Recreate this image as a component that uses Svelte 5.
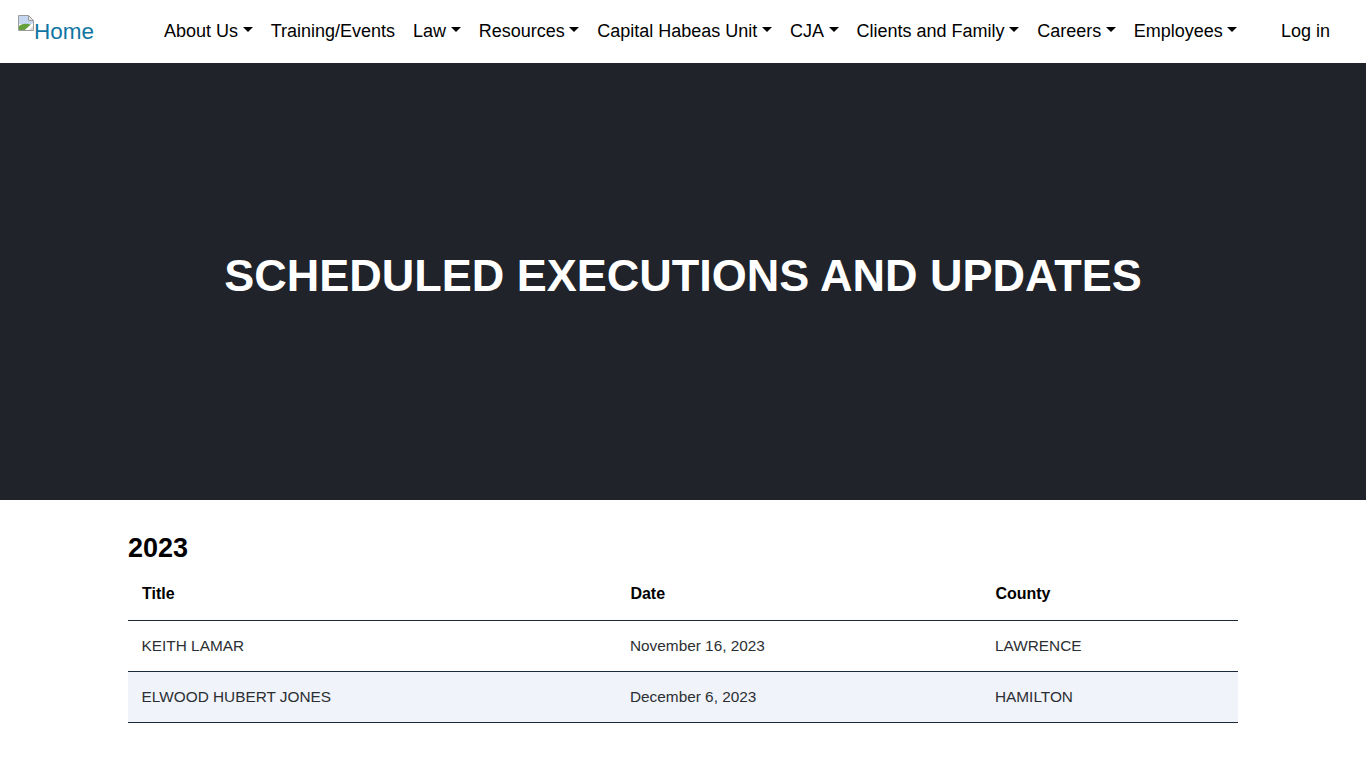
<script>
  const menu = [
    { label: "About Us", caret: true },
    { label: "Training/Events", caret: false },
    { label: "Law", caret: true },
    { label: "Resources", caret: true },
    { label: "Capital Habeas Unit", caret: true },
    { label: "CJA", caret: true },
    { label: "Clients and Family", caret: true },
    { label: "Careers", caret: true },
    { label: "Employees", caret: true }
  ];

  const rows = [
    { title: "KEITH LAMAR", date: "November 16, 2023", county: "LAWRENCE" },
    { title: "ELWOOD HUBERT JONES", date: "December 6, 2023", county: "HAMILTON" }
  ];
</script>

<header class="navbar">
  <a href="#home" class="brand">
    <svg class="broken" width="16" height="16" viewBox="0 0 16 16" aria-hidden="true">
      <path d="M0.5 0.5H10.5L15.5 5.5V15.5H0.5Z" fill="#fff" stroke="#9c9c9c" />
      <path d="M10.5 0.5V5.5H15.5Z" fill="#e4e4e4" stroke="#9c9c9c" />
      <path d="M1 1H10V6H15V9H1Z" fill="#c4d6f0" />
      <path d="M1 15V11C4 8.5 8 8 13 9.5L7 15Z" fill="#66a03c" />
      <path d="M7 15L15 8V11L11 15Z" fill="#fff" />
      <path d="M11 15L15 11V15Z" fill="#dcdcdc" />
    </svg><span>Home</span>
  </a>
  <nav class="menu">
    {#each menu as item}
      <a href="#item" class="nav-link" class:caret={item.caret}>{item.label}</a>
    {/each}
  </nav>
  <a href="#login" class="login">Log in</a>
</header>

<section class="hero">
  <h1>SCHEDULED EXECUTIONS AND UPDATES</h1>
</section>

<main class="container">
  <h2>2023</h2>
  <table>
    <thead>
      <tr>
        <th class="col-title">Title</th>
        <th class="col-date">Date</th>
        <th>County</th>
      </tr>
    </thead>
    <tbody>
      {#each rows as row}
        <tr>
          <td>{row.title}</td>
          <td>{row.date}</td>
          <td>{row.county}</td>
        </tr>
      {/each}
    </tbody>
  </table>
</main>

<style>
  :global(body) {
    font-family: "Liberation Sans", Arial, sans-serif;
    color: #212529;
    background: #fff;
  }
  .navbar {
    height: 63px;
    display: flex;
    align-items: center;
    padding: 0 36px 0 18px;
    box-sizing: border-box;
    background: #fff;
  }
  .brand {
    width: 146px;
    flex: none;
    align-self: flex-start;
    padding-top: 16px;
    color: #0f76a3;
    font-size: 22.5px;
    line-height: 32px;
    text-decoration: none;
    white-space: nowrap;
  }
  .broken {
    vertical-align: top;
    margin-top: -1px;
  }
  .menu {
    display: flex;
    flex: 1;
    gap: 18px;
  }
  .nav-link,
  .login {
    color: #000;
    font-size: 18px;
    line-height: 27px;
    text-decoration: none;
    white-space: nowrap;
  }
  .caret::after {
    content: "";
    display: inline-block;
    margin-left: 4.59px;
    vertical-align: 4.59px;
    border-top: 5.4px solid;
    border-left: 5.4px solid transparent;
    border-right: 5.4px solid transparent;
  }
  .hero {
    height: 437px;
    padding-bottom: 12px;
    box-sizing: border-box;
    display: flex;
    align-items: center;
    justify-content: center;
    background: #20232a;
  }
  h1 {
    margin: 0;
    color: #fff;
    font-size: 45px;
    line-height: 54px;
    font-weight: 700;
  }
  .container {
    width: 1110px;
    margin: 0 auto;
    padding-top: 29px;
  }
  h2 {
    margin: 0 0 2px;
    color: #000;
    font-size: 27px;
    line-height: 38px;
    font-weight: 700;
  }
  table {
    width: 100%;
    border-collapse: collapse;
    table-layout: fixed;
    font-size: 16px;
  }
  th {
    height: 51px;
    padding: 0 14px;
    box-sizing: border-box;
    color: #000;
    font-weight: 700;
    text-align: left;
    border-bottom: 1px solid #1b2a3a;
  }
  td {
    height: 50px;
    padding: 0 14px 0 13.6px;
    font-size: 15.36px;
    line-height: 24px;
    color: #2b2f33;
    border-bottom: 1px solid #1b2a3a;
  }
  .col-title {
    width: 488.4px;
  }
  .col-date {
    width: 365px;
  }
  tbody tr:nth-child(even) {
    background: #f0f3fa;
  }
</style>
